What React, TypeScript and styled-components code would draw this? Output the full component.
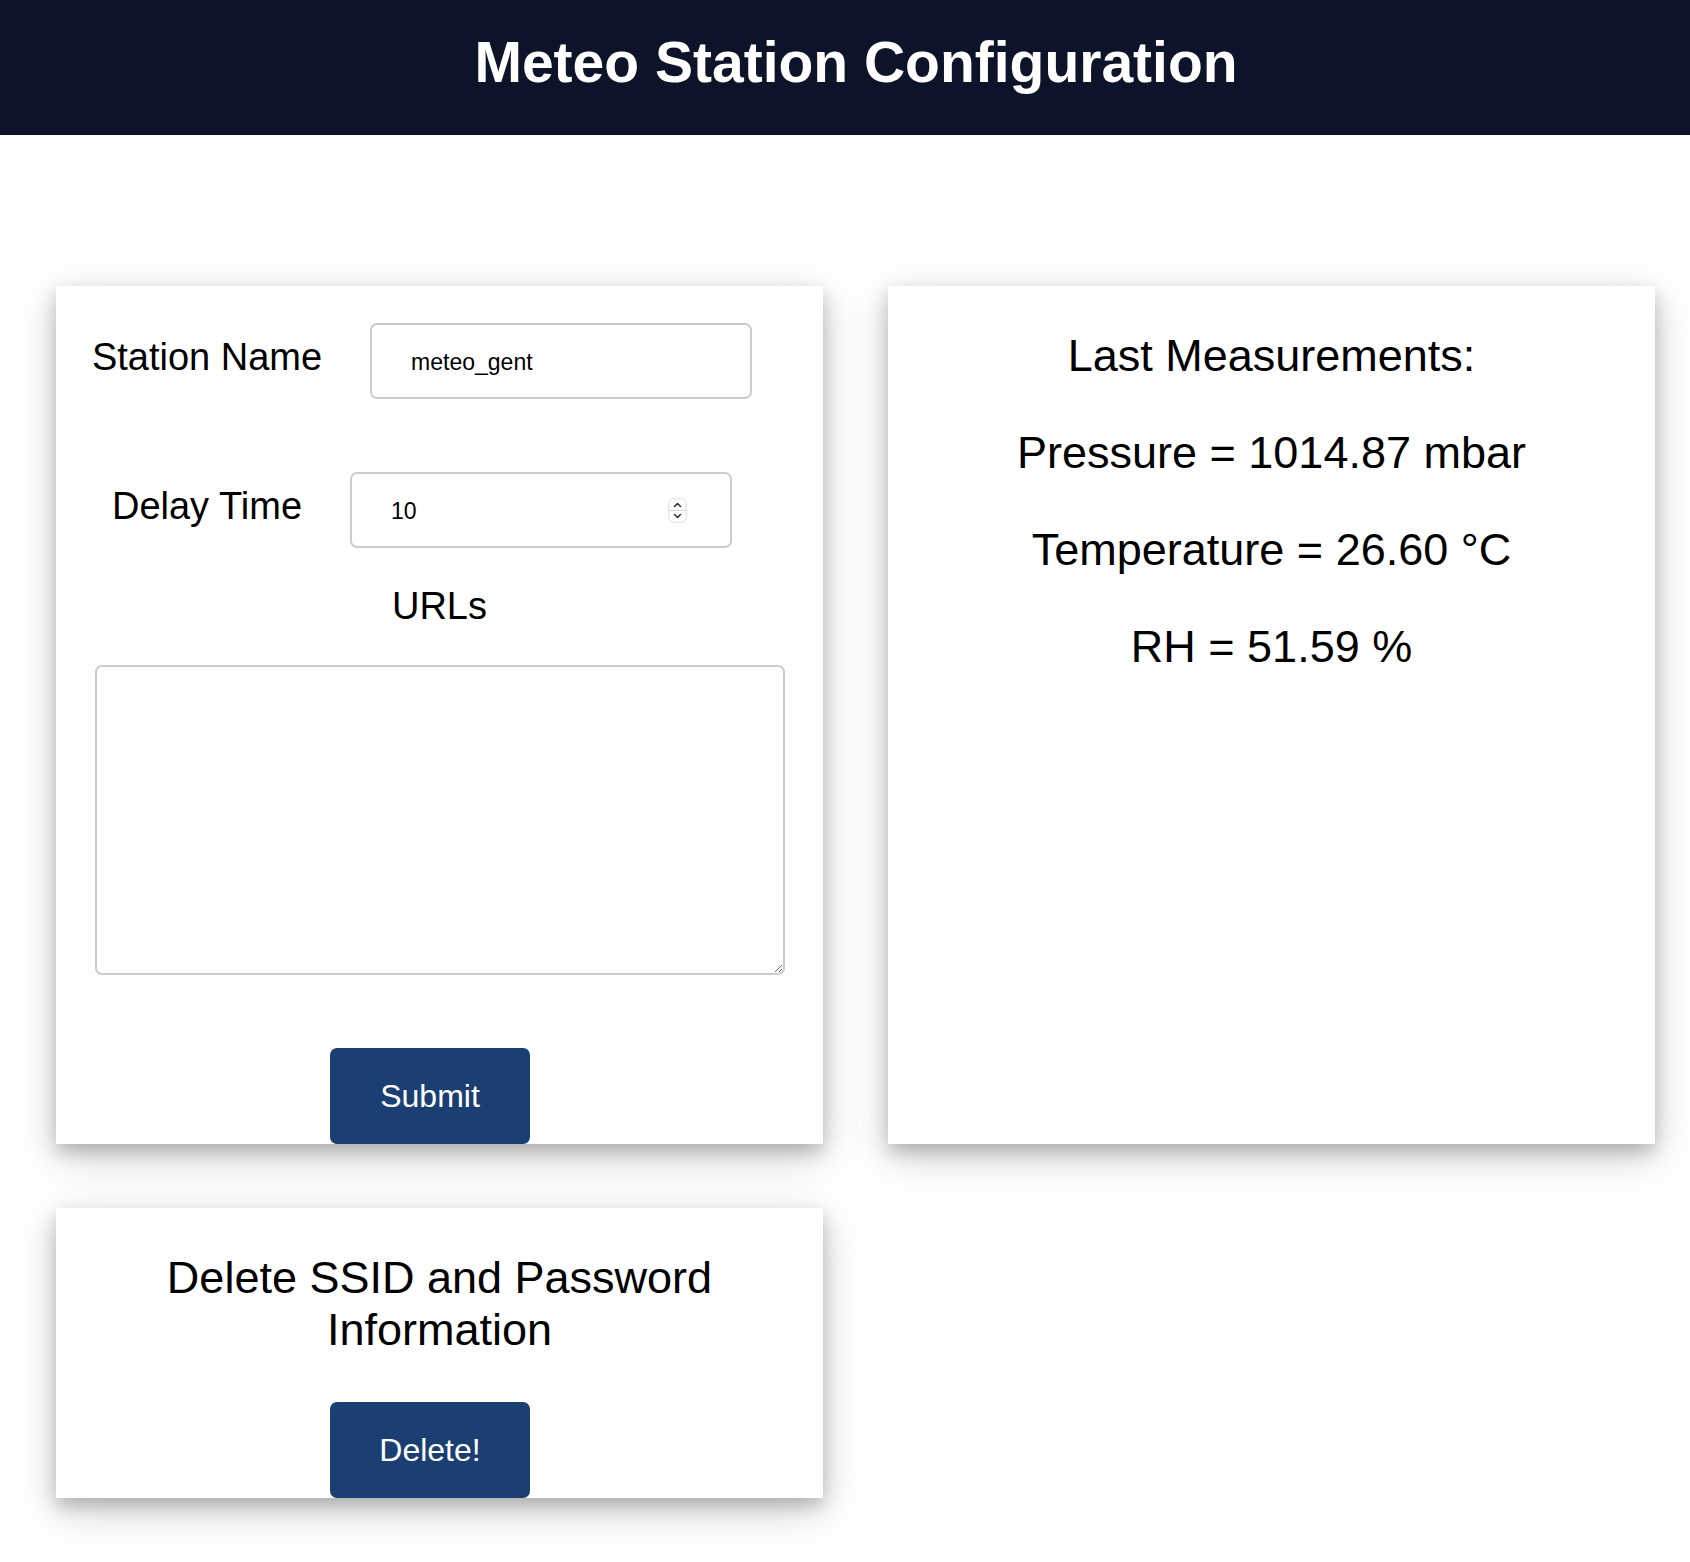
import React from "react";
import styled, { createGlobalStyle } from "styled-components";

const GlobalStyle = createGlobalStyle`
  html, body {
    margin: 0;
    padding: 0;
    background: #ffffff;
  }
  body {
    font-family: "Liberation Sans", Arial, Helvetica, sans-serif;
    color: #000;
  }
  * { box-sizing: border-box; }
`;

const Header = styled.header`
  height: 135px;
  background: #0d1329;
  padding: 29px 0 0 22px;
`;

const Title = styled.h1`
  margin: 0;
  text-align: center;
  color: #ffffff;
  font-size: 57px;
  font-weight: 700;
  line-height: normal;
`;

const Grid = styled.main`
  display: grid;
  grid-template-columns: 767px 767px;
  column-gap: 65px;
  row-gap: 64px;
  padding: 151px 0 60px 56px;
`;

const Card = styled.section<{ $padTop: number }>`
  background: #ffffff;
  box-shadow: 0 8px 16px 0 rgba(0, 0, 0, 0.2), 0 12px 40px 0 rgba(0, 0, 0, 0.19);
  display: flex;
  flex-direction: column;
  padding-top: ${(p) => p.$padTop}px;
`;

const FieldRow = styled.div<{ $mt?: number }>`
  display: flex;
  justify-content: center;
  align-items: baseline;
  gap: 48px;
  padding-right: 35px;
  margin-top: ${(p) => p.$mt ?? 0}px;
`;

const Label = styled.label`
  font-size: 38px;
  line-height: normal;
  white-space: nowrap;
`;

const FieldWrap = styled.div`
  position: relative;
  display: inline-block;
`;

const TextInput = styled.input`
  width: 382px;
  height: 76px;
  border: 2px solid #cccccc;
  border-radius: 7px;
  padding: 2px 36px 0 39px;
  font-family: "Liberation Sans", Arial, Helvetica, sans-serif;
  font-size: 23px;
  color: #000;
  background: #fff;
  outline: none;
`;

const Spinner = styled.svg`
  position: absolute;
  right: 45px;
  top: 26px;
  width: 19px;
  height: 25px;
  pointer-events: none;
`;

const CenterHeading = styled.div<{ $mt?: number }>`
  margin-top: ${(p) => p.$mt ?? 0}px;
  text-align: center;
  font-size: 38px;
  line-height: normal;
`;

const UrlArea = styled.textarea`
  display: block;
  align-self: center;
  margin-top: 37px;
  width: 690px;
  height: 310px;
  border: 2px solid #cccccc;
  border-radius: 7px;
  padding: 12px 20px;
  font-family: "Liberation Sans", Arial, Helvetica, sans-serif;
  font-size: 23px;
  background: #fff;
  outline: none;
`;

const ActionButton = styled.button<{ $mt: number }>`
  align-self: center;
  margin: ${(p) => p.$mt}px 19px 0 0;
  width: 200px;
  height: 96px;
  border: none;
  border-radius: 7px;
  background: #1c3f73;
  color: #ffffff;
  font-family: "Liberation Sans", Arial, Helvetica, sans-serif;
  font-size: 32px;
  cursor: pointer;
`;

const Measurements = styled.div`
  display: flex;
  flex-direction: column;
  align-items: center;
  gap: 45px;
`;

const BigLine = styled.p`
  margin: 0;
  font-size: 45px;
  line-height: normal;
  text-align: center;
`;

const DeleteText = styled.p`
  margin: 0 38px;
  font-size: 45px;
  line-height: normal;
  text-align: center;
`;

export default function App() {
  return (
    <>
      <GlobalStyle />
      <Header>
        <Title>Meteo Station Configuration</Title>
      </Header>
      <Grid>
        <Card $padTop={37}>
          <FieldRow>
            <Label htmlFor="station">Station Name</Label>
            <FieldWrap>
              <TextInput id="station" type="text" defaultValue="meteo_gent" />
            </FieldWrap>
          </FieldRow>
          <FieldRow $mt={73}>
            <Label htmlFor="delay">Delay Time</Label>
            <FieldWrap>
              <TextInput id="delay" type="text" defaultValue="10" />
              <Spinner viewBox="0 0 19 25">
                <rect x="0.75" y="0.75" width="17.5" height="23.5" rx="5" fill="#ffffff" stroke="#dddddd" strokeWidth="1" />
                <line x1="1" y1="12.5" x2="18" y2="12.5" stroke="#d6d6d6" strokeWidth="1" />
                <path d="M6.5 8.5 L9.5 5.5 L12.5 8.5" fill="none" stroke="#333" strokeWidth="1.6" strokeLinecap="round" strokeLinejoin="round" />
                <path d="M6.5 16.5 L9.5 19.5 L12.5 16.5" fill="none" stroke="#333" strokeWidth="1.6" strokeLinecap="round" strokeLinejoin="round" />
              </Spinner>
            </FieldWrap>
          </FieldRow>
          <CenterHeading $mt={37}>URLs</CenterHeading>
          <UrlArea />
          <ActionButton $mt={73}>Submit</ActionButton>
        </Card>
        <Card $padTop={44}>
          <Measurements>
            <BigLine>Last Measurements:</BigLine>
            <BigLine>Pressure = 1014.87 mbar</BigLine>
            <BigLine>Temperature = 26.60 °C</BigLine>
            <BigLine>RH = 51.59 %</BigLine>
          </Measurements>
        </Card>
        <Card $padTop={44}>
          <DeleteText>Delete SSID and Password Information</DeleteText>
          <ActionButton $mt={46}>Delete!</ActionButton>
        </Card>
      </Grid>
    </>
  );
}
